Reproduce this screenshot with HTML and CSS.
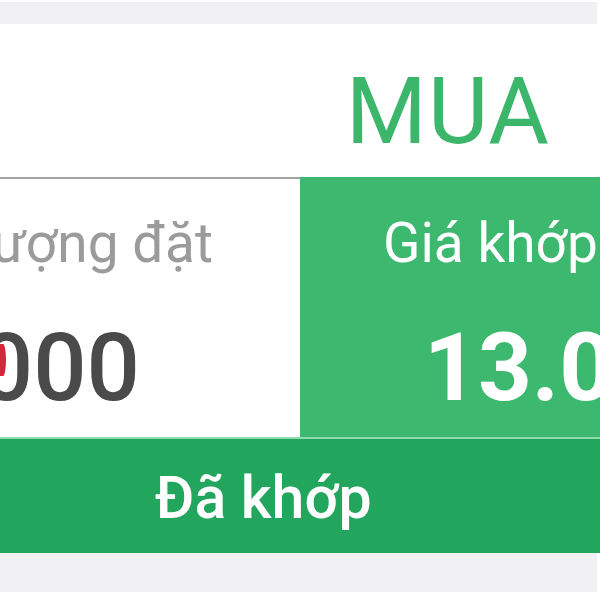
FILE: index.html
```html
<!DOCTYPE html>
<html lang="vi">
<head>
    <meta charset="UTF-8">
    <meta name="viewport" content="width=device-width, initial-scale=1.0">
    <title>Lệnh khớp</title>
    <link rel="stylesheet" href="styles.css">
</head>
<body>
    <div class="screen">
        <div class="top-bar"></div>

        <!-- Order side -->
        <div class="order-header">
            <span class="side-buy">MUA</span>
        </div>

        <!-- Quantity / matched price -->
        <div class="order-cells">
            <div class="cell cell-qty">
                <div class="cell-label">Khối lượng đặt</div>
                <div class="cell-value">1.000</div>
                <span class="touch-dot"></span>
            </div>
            <div class="cell cell-price">
                <div class="cell-label">Giá khớp</div>
                <div class="cell-value">13.000</div>
            </div>
        </div>

        <div class="status-bar">Đã khớp</div>
        <div class="bottom-bar"></div>
    </div>
</body>
</html>
```

FILE: styles.css
```css
body {
    margin: 0;
    padding: 0;
    background-color: #fff;
    font-family: Roboto, "Liberation Sans", Arial, sans-serif;
}

.screen {
    width: 600px;
    height: 600px;
    overflow: hidden;
}

/* Grey strips above and below the card */
.top-bar {
    height: 22px;
    margin-top: 2px;
    margin-right: 3px;
    background-color: #f1f1f4;
}

.bottom-bar {
    height: 39px;
    margin-right: 3px;
    background-color: #f1f1f4;
}

/* Header with order side */
.order-header {
    height: 153px;
    display: flex;
    justify-content: flex-end;
    padding-right: 50px;
    box-sizing: border-box;
    padding-top: 41px;
}

.side-buy {
    font-size: 93px;
    line-height: 1;
    color: #3cb66b;
    letter-spacing: 1px;
}

/* Two cells */
.order-cells {
    display: grid;
    grid-template-columns: 300px 300px;
    height: 260px;
}

.cell {
    overflow: hidden;
    white-space: nowrap;
    box-sizing: border-box;
}

.cell-qty {
    position: relative;
    display: flex;
    flex-direction: column;
    align-items: flex-end;
    border-top: 2px solid #a3a3a3;
    padding-top: 37px;
}

.cell-price {
    background-color: #3cb96e;
    color: #fff;
    padding-top: 39px;
}

.cell-label {
    font-size: 55px;
    line-height: 1;
}

.cell-value {
    font-size: 94px;
    line-height: 1;
    margin-top: 50px;
}

.cell-qty .cell-label {
    color: #9b9b9b;
    margin-right: 87px;
}

.cell-qty .cell-value {
    color: #4a4a4a;
    font-weight: 500;
    margin-right: 160px;
}

.cell-price .cell-label {
    padding-left: 83px;
}

.cell-price .cell-value {
    font-weight: 700;
    padding-left: 124px;
}

/* red touch marker over the quantity */
.touch-dot {
    position: absolute;
    left: 0;
    top: 165px;
    width: 6px;
    height: 32px;
    border-radius: 0 50% 50% 0;
    background-color: #d3283c;
}

/* Status */
.status-bar {
    height: 116px;
    display: flex;
    align-items: center;
    padding-left: 155px;
    padding-top: 3px;
    box-sizing: border-box;
    border-top: 2px solid #8fdcae;
    background-color: #22a55d;
    color: #fff;
    font-size: 59px;
    font-weight: 500;
}
```
